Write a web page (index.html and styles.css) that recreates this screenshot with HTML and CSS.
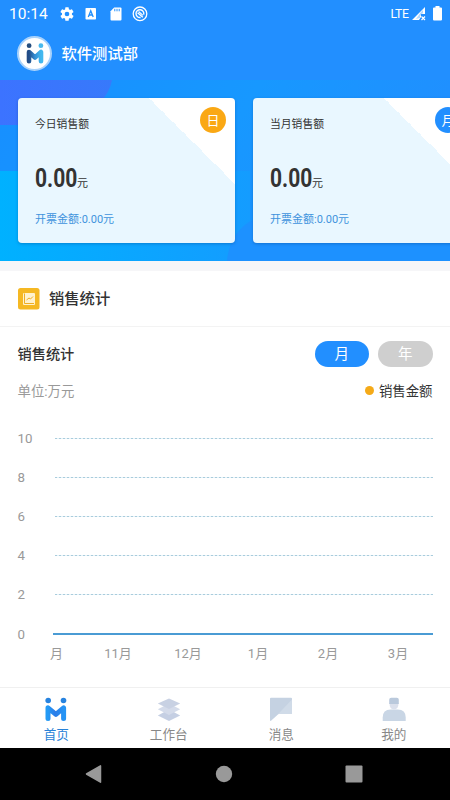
FILE: index.html
```
<!DOCTYPE html>
<html lang="zh-CN">
<head>
<meta charset="utf-8">
<title>首页</title>
<link rel="stylesheet" href="styles.css">
</head>
<body>
<header class="status">
  <span class="clock">10:14</span>
  <svg class="st" width="16" height="16" viewBox="0 0 24 24"><path fill="#fff" d="M19.4 13a7.500 7.500 0 0 0 0-2l2.100-1.650a.5.5 0 0 0 .12-.64l-2-3.460a.5.5 0 0 0-.61-.22l-2.490 1a7.300 7.300 0 0 0-1.690-.98l-.38-2.650A.49.49 0 0 0 14 2h-4a.49.49 0 0 0-.49.420l-.38 2.650c-.61.250-1.170.590-1.690.980l-2.490-1a.5.5 0 0 0-.61.220l-2 3.460a.5.5 0 0 0 .12.640L4.570 11a7.900 7.900 0 0 0 0 2l-2.110 1.650a.5.5 0 0 0-.12.640l2 3.460c.12.220.39.300.61.220l2.490-1c.52.400 1.080.730 1.690.980l.38 2.650c.03.240.24.400.49.400h4c.25 0 .46-.16.490-.4l.38-2.650a7.700 7.700 0 0 0 1.690-.98l2.490 1c.23.090.49 0 .61-.22l2-3.460a.5.5 0 0 0-.12-.64zM12 15.500a3.500 3.500 0 1 1 0-7 3.500 3.500 0 0 1 0 7z"/></svg>
  <svg class="st" width="16" height="16" viewBox="0 0 16 16"><rect x="2.500" y="2" width="10.500" height="11.500" rx=".8" fill="#fff"/><path d="M5.300 11 7.750 4.800 10.200 11M6.200 9h3.100" fill="none" stroke="#228ffc" stroke-width="1.300"/></svg>
  <svg class="st" width="16" height="16" viewBox="0 0 16 16"><path fill="#fff" d="M6.200 1.500H12.500a1 1 0 0 1 1 1V13.500a1 1 0 0 1-1 1H3.500a1 1 0 0 1-1-1V5.200z"/><path d="M6.800 2.800v2.500M9 2.800v2.500M11.200 2.800v2.500" stroke="#228ffc" stroke-width="1"/></svg>
  <svg class="st" width="16" height="16" viewBox="0 0 16 16" fill="none" stroke="#fff"><circle cx="8" cy="7.800" r="6.800" stroke-width="1.300"/><path d="M10.800 11.200 5.600 6.700M11.700 8.600A3.900 3.900 0 1 0 8.600 11.500" stroke-width="1.400"/><path d="M6.600 5.500 11 9.400" stroke-width="1.100"/></svg>
  <span class="lte">LTE</span>
  <svg class="signal" width="14" height="14" viewBox="0 0 14 14"><path fill="#fff" d="M0 13 13 0v7H9v3L7 13z"/><path fill="#228ffc" d="m9 5 2-2v3L8 9v2L4 12z" opacity=".35"/><path d="m9.500 9.500 3.500 3.500m0-3.500L9.500 13" stroke="#fff" stroke-width="1.200"/></svg>
  <svg width="9" height="15" viewBox="0 0 9 15"><path fill="#fff" d="M2.500 0h4v1.500H8a1 1 0 0 1 1 1V13.500a1 1 0 0 1-1 1H1a1 1 0 0 1-1-1v-11a1 1 0 0 1 1-1h1.500z"/></svg>
</header>
<div class="brand">
  <div class="avatar">
    <svg width="18" height="21" viewBox="0 0 18 21"><defs><linearGradient id="a" x2="1"><stop stop-color="#224c87"/><stop offset=".5" stop-color="#338fd5"/><stop offset="1" stop-color="#42b8ef"/></linearGradient></defs><circle cx="3.100" cy="2.700" r="2.400" fill="#244e80"/><circle cx="14.900" cy="2.700" r="2.400" fill="#4ab9ec"/><path d="M3 18.200V9l6 5.500L15 9v9.200" fill="none" stroke="url(#a)" stroke-width="4.600" stroke-linecap="round" stroke-linejoin="round"/></svg>
  </div>
  <h1>软件测试部</h1>
</div>
<section class="hero">
  <svg class="wash" width="450" height="181" viewBox="0 0 450 181" preserveAspectRatio="none">
    <defs>
      <linearGradient id="b" x2="1" y2=".25"><stop stop-color="#178fff"/><stop offset=".55" stop-color="#1798ff"/><stop offset="1" stop-color="#208fff"/></linearGradient>
      <linearGradient id="c" x2="1"><stop stop-color="#00b1ff"/><stop offset="1" stop-color="#149cff"/></linearGradient>
      <linearGradient id="d" x2="1"><stop stop-color="#3c73ff"/><stop offset="1" stop-color="#3779fb"/></linearGradient>
    </defs>
    <rect width="450" height="181" fill="url(#b)"/>
    <path d="M0 91h250v50q-20 12-23 40H0z" fill="url(#c)"/>
    <path d="M227 181q3-28 25-40h198v40z" fill="#1d91ff"/>
    <path d="M0 0h112q-2 12-13 24L70 45H0z" fill="url(#d)"/>
  </svg>
  <div class="cards">
    <article class="card">
      <span class="badge day">日</span>
      <h2>今日销售额</h2>
      <p class="amount"><b>0.00</b><span>元</span></p>
      <p class="invoice">开票金额:0.00元</p>
    </article>
    <article class="card">
      <span class="badge month">月</span>
      <h2>当月销售额</h2>
      <p class="amount"><b>0.00</b><span>元</span></p>
      <p class="invoice">开票金额:0.00元</p>
    </article>
  </div>
</section>
<section class="section-head">
  <svg width="22" height="22" viewBox="0 0 22 22"><rect width="21.500" height="21.500" rx="2.500" fill="#f5b823"/><rect x="5" y="5" width="12" height="12" rx="1" fill="#fff2ce"/><path d="M6.500 5.500v10h9.500M8.500 12l2.500-2 1.500 1L15 8.500" fill="none" stroke="#efae24" stroke-width="1"/></svg>
  <h2>销售统计</h2>
</section>
<main class="stats">
  <div class="row title-row">
    <h3>销售统计</h3>
    <div class="pills"><span class="pill on">月</span><span class="pill">年</span></div>
  </div>
  <div class="row unit-row">
    <span>单位:万元</span>
    <span class="legend"><i></i>销售金额</span>
  </div>
  <div class="chart">
    <div class="tick"><span>10</span><i></i></div>
    <div class="tick"><span>8</span><i></i></div>
    <div class="tick"><span>6</span><i></i></div>
    <div class="tick"><span>4</span><i></i></div>
    <div class="tick"><span>2</span><i></i></div>
    <div class="tick zero"><span>0</span><i></i></div>
  </div>
  <div class="months"><span class="first">月</span><span>11月</span><span>12月</span><span>1月</span><span>2月</span><span>3月</span></div>
</main>
<nav class="tabs">
  <div class="tab active">
    <svg width="24" height="26" viewBox="0 0 24 26"><defs><linearGradient id="e" x2="1"><stop stop-color="#239af5"/><stop offset=".45" stop-color="#2b7ce8"/><stop offset="1" stop-color="#2594f5"/></linearGradient></defs><circle cx="4.200" cy="3.500" r="2.800" fill="#2783df"/><circle cx="19.500" cy="3.500" r="2.800" fill="#2783df"/><path d="M4 21.600V10.800l7.900 6.600 7.700-6.600v10.800" fill="none" stroke="url(#e)" stroke-width="5" stroke-linecap="round" stroke-linejoin="round"/></svg>
    <span>首页</span>
  </div>
  <div class="tab">
    <svg width="24" height="26" viewBox="0 0 24 26"><path d="m.8 18.500 11.200-6 11.200 6L12 24z" fill="#c5cfe3"/><path d="m.8 12.300 11.200-5.800 11.200 5.800L12 18z" fill="#d4dbea"/><path d="m.8 6.500 11.200-5 11.200 5L12 12z" fill="#c8d1e3"/></svg>
    <span>工作台</span>
  </div>
  <div class="tab">
    <svg width="24" height="26" viewBox="0 0 24 26"><path d="M2 .7h20q1 0 1 1V16q0 1-1 1H9.500L2.300 23.500Q1 24.500 1 23V1.700q0-1 1-1z" fill="#c5d2e2"/><path d="M23 2.500V16q0 1-1 1H9.500L8 18.300z" fill="#d0dbe8"/></svg>
    <span>消息</span>
  </div>
  <div class="tab">
    <svg width="24" height="26" viewBox="0 0 24 26"><path d="M.7 24v-3.500q0-8 8-8h7q8 0 8 8V24z" fill="#c9d6e5"/><path d="M7.500 6h9q0 6.500-4.500 6.500T7.500 6z" fill="#dbe0ec"/><path d="M7.200 7V2.700q0-2 2-2h5.600q2 0 2 2V7z" fill="#bac9dc"/></svg>
    <span>我的</span>
  </div>
</nav>
<footer class="system">
  <svg width="18" height="20" viewBox="0 0 18 20"><path d="M1.500 10 15.500 1.800v16.400z" fill="#999" stroke="#999" stroke-width="1.500" stroke-linejoin="round"/></svg>
  <svg width="18" height="18" viewBox="0 0 18 18"><circle cx="9" cy="9" r="8.200" fill="#999"/></svg>
  <svg width="18" height="18" viewBox="0 0 18 18"><rect x=".5" y=".5" width="17" height="17" rx="1" fill="#999"/></svg>
</footer>
</body>
</html>
```
FILE: styles.css
```
* { box-sizing: border-box; margin: 0; padding: 0; }
html, body { width: 450px; height: 800px; overflow: hidden; }
body {
  display: flex;
  flex-direction: column;
  background: #fff;
  color: #333;
  font-family: Roboto, "Noto Sans CJK SC", sans-serif;
}
svg { display: block; flex: none; }
.status {
  flex: none;
  height: 27px;
  padding: 0 8.500px 0 9px;
  display: flex;
  align-items: center;
  background: #228fff;
  color: #fff;
}
.clock { width: 50px; font-size: 15.5px; letter-spacing: 0; }
.st { margin-right: 8.300px; }
.lte { margin-left: auto; font-size: 12.300px; letter-spacing: -.4px; }
.signal { margin: 0 7px 0 3px; }
.brand {
  flex: none;
  height: 53px;
  padding: 0 17px;
  display: flex;
  align-items: center;
  gap: 9.500px;
  background: #228fff;
  color: #fff;
}
.avatar {
  width: 35px;
  height: 35px;
  border: 2px solid #a9d2fb;
  border-radius: 50%;
  background: #fff;
  display: flex;
  align-items: center;
  justify-content: center;
}
.brand h1 { font-size: 15.300px; line-height: 22px; font-weight: 500; }
.hero { flex: none; height: 181px; position: relative; overflow: hidden; }
.wash { position: absolute; inset: 0; }
.cards { position: relative; display: flex; gap: 17.500px; padding: 18px 0 0 17.500px; }
.card {
  position: relative;
  flex: none;
  width: 217.500px;
  height: 145px;
  padding: 18px 17.500px 0;
  border-radius: 4px;
  background: linear-gradient(to top right, transparent 0 50%, #fff 50%) top right / 86px 86px no-repeat, #e9f7ff;
  box-shadow: 0 1px 3px rgba(0, 60, 130, .35);
}
.card h2 { font-size: 10.800px; line-height: 18px; font-weight: 400; }
.badge {
  position: absolute;
  top: 9px;
  right: 9px;
  width: 26px;
  height: 26px;
  border-radius: 50%;
  color: #fff;
  font-size: 13px;
  line-height: 27px;
  text-align: center;
}
.day { background: #faa814; }
.month { background: #228fff; }
.amount { display: flex; align-items: baseline; height: 30px; margin-top: 30px; line-height: 30px; }
.amount b { width: 42px; font-size: 25px; font-weight: 700; transform: scaleX(.84); transform-origin: left; }
.amount span { font-size: 11px; }
.invoice { margin-top: 17px; font-size: 11px; line-height: 18px; color: #3f93dd; }
.section-head {
  flex: none;
  height: 66px;
  border-top: 10px solid #f6f6f8;
  border-bottom: 1px solid #f3f3f3;
  padding: 0 17.500px;
  display: flex;
  align-items: center;
  gap: 9.500px;
}
.section-head h2 { font-size: 15.300px; line-height: 22px; font-weight: 500; }
.stats { flex: 1; min-height: 0; padding: 0 17.500px; }
.row { display: flex; align-items: center; justify-content: space-between; }
.title-row { height: 54px; }
.title-row h3 { margin-top: -2px; font-size: 14.200px; font-weight: 500; }
.pills { display: flex; gap: 9px; }
.pill {
  width: 54.500px;
  height: 26px;
  border-radius: 13px;
  background: #cfcfcf;
  color: #fff;
  font-size: 14.500px;
  line-height: 28px;
  text-align: center;
}
.pill.on { background: #228fff; }
.unit-row { height: 20px; margin-top: -1px; font-size: 13.400px; color: #999; }
.legend { display: flex; align-items: center; gap: 5px; color: #333; }
.legend i { width: 9px; height: 9px; border-radius: 50%; background: #f5aa18; }
.chart { margin-top: 18.500px; }
.tick { display: flex; align-items: center; height: 39.200px; font-size: 13.300px; color: #999; }
.tick span { width: 37px; }
.tick i {
  flex: 1;
  height: 1px;
  background: repeating-linear-gradient(90deg, #a9ccdc 0 2px, #e6f2f8 2px 4px);
}
.tick.zero span { width: 35px; }
.tick.zero i { height: 1.500px; background: #4a9bd4; }
.months {
  display: flex;
  width: 381px;
  height: 20px;
  margin: -10px 0 0 33.500px;
  font-size: 13px;
  line-height: 20px;
  color: #999;
}
.months span { flex: none; width: 70px; text-align: center; }
.months .first { width: 32px; padding-left: 0; text-align: left; text-indent: -1px; }
.tabs { flex: none; height: 60.500px; display: flex; border-top: 1px solid #f0f0f0; }
.tab {
  flex: 1;
  display: flex;
  flex-direction: column;
  align-items: center;
  padding-top: 9px;
  color: #888;
  font-size: 12.600px;
  line-height: 20px;
}
.tab span { margin-top: 1.500px; }
.tab.active { color: #2882d7; }
.system {
  flex: none;
  height: 52.500px;
  display: flex;
  align-items: center;
  justify-content: space-between;
  padding: 0 87px 0 85px;
  background: #000;
}
```
